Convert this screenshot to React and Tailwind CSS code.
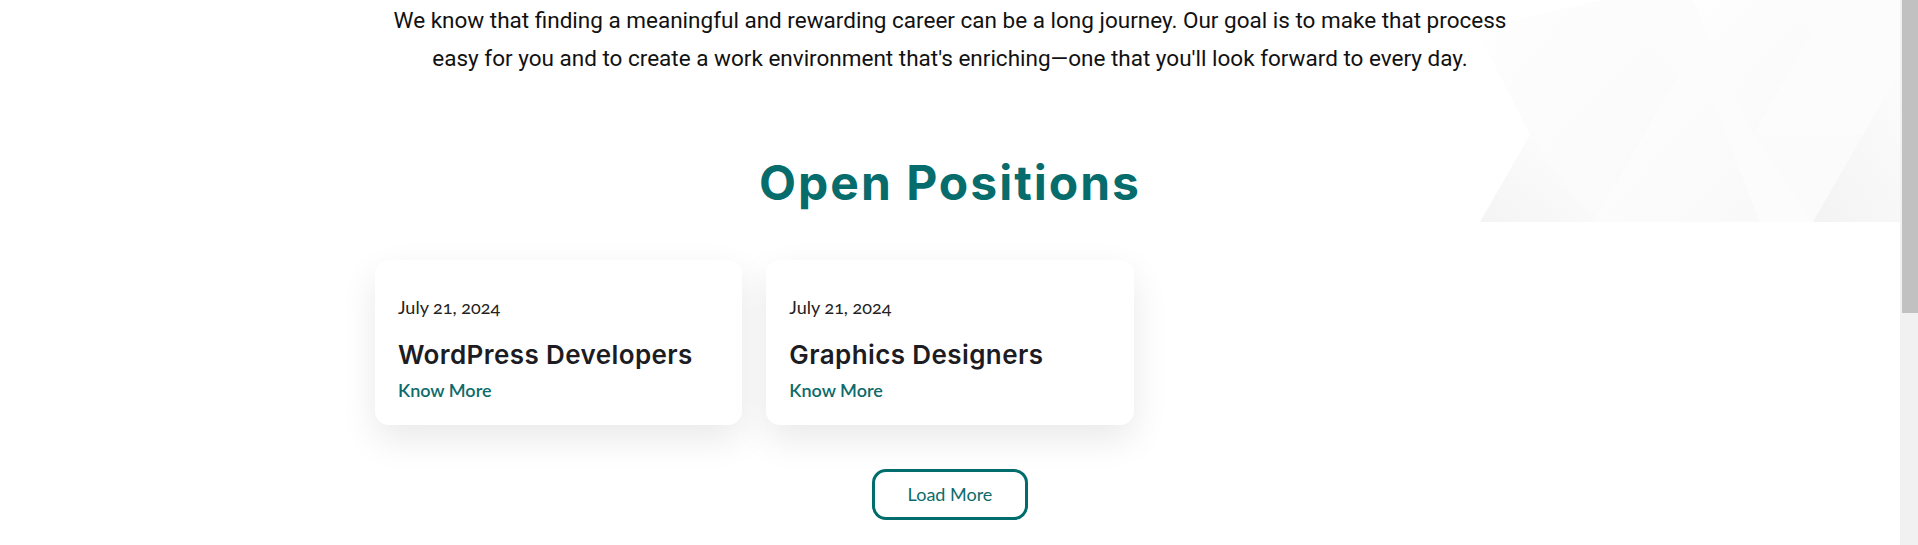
import React from 'react';

const JOBS = [
  { date: 'July 21, 2024', title: 'WordPress Developers' },
  { date: 'July 21, 2024', title: 'Graphics Designers' },
];

function Backdrop() {
  return (
    <svg
      className="absolute right-0 top-0 h-[222px] w-[440px]"
      viewBox="0 0 440 222"
      fill="none"
      aria-hidden="true"
    >
      <defs>
        <linearGradient id="g1" x1="0" y1="1" x2="1" y2="0">
          <stop offset="0" stopColor="#f4f4f4" />
          <stop offset="1" stopColor="#fefefe" />
        </linearGradient>
        <linearGradient id="g2" x1="0" y1="0" x2="1" y2="1">
          <stop offset="0" stopColor="#fefefe" />
          <stop offset="1" stopColor="#f9f9f9" />
        </linearGradient>
        <linearGradient id="g3" x1="0" y1="1" x2="1" y2="0">
          <stop offset="0" stopColor="#f3f3f3" />
          <stop offset="1" stopColor="#fcfcfc" />
        </linearGradient>
      </defs>
      <polygon points="17,30 70,135 20,222 440,222 440,0 140,0" fill="#fcfcfc" />
      <polygon points="17,30 70,135 20,222 133,222 220,75 140,0" fill="url(#g2)" />
      <polygon points="20,222 70,135 133,222" fill="url(#g1)" />
      <polygon points="133,222 233,50 300,222" fill="url(#g2)" />
      <polygon points="233,0 293,135 353,30 300,0" fill="url(#g2)" />
      <polygon points="293,135 440,135 440,222 353,222" fill="#fbfbfb" />
      <polygon points="353,222 440,70 440,222" fill="url(#g3)" />
    </svg>
  );
}

function JobCard({ job }) {
  return (
    <div className="h-[165px] rounded-[14px] bg-white px-[23px] pt-[34px] shadow-[0_14px_36px_rgba(0,0,0,0.09)]">
      <p className="font-['Lato',sans-serif] text-[18px] leading-[27px] text-[#222] oldstyle-nums">{job.date}</p>
      <h3 className="mt-[18px] font-['Inter',sans-serif] text-[26px] font-semibold leading-[32px] tracking-[0.4px] text-[#1c1c22]">
        {job.title}
      </h3>
      <a href="#" className="mt-[6px] block font-['Lato',sans-serif] text-[18px] font-semibold leading-[26px] text-[#0d6b6b]">
        Know More
      </a>
    </div>
  );
}

export default function App() {
  return (
    <div className="flex h-[545px] w-full overflow-hidden bg-white">
      <main className="relative flex-1">
        <Backdrop />
        <div className="relative flex flex-col items-center pt-px">
          <p className="w-[1150px] text-center font-['Roboto',sans-serif] text-[22.5px] leading-[38px] text-[#111]">
            We know that finding a meaningful and rewarding career can be a long journey. Our goal is to make that process
            <br />
            easy for you and to create a work environment that's enriching—one that you'll look forward to every day.
          </p>
          <h2 className="mt-[78px] font-['Inter',sans-serif] text-[48px] font-bold leading-[56px] tracking-[2px] text-[#076c6c]">
            Open Positions
          </h2>
          <div className="mt-[49px] grid w-[1150px] grid-cols-3 gap-6">
            {JOBS.map((job) => (
              <JobCard key={job.title} job={job} />
            ))}
          </div>
          <button className="mt-[44px] h-[51px] w-[156px] rounded-[14px] border-[3px] border-[#006c6c] font-['Lato',sans-serif] text-[18px] text-[#0d6b6b]">
            Load More
          </button>
        </div>
      </main>
      <div className="w-[18px] shrink-0 bg-[#f1f1f1] pl-[2px]">
        <div className="h-[313px] bg-[#c1c1c1]" />
      </div>
    </div>
  );
}
